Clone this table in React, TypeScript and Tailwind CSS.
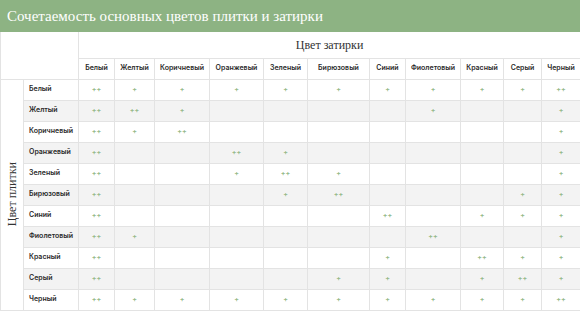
import React from 'react';

const cols = ['Белый', 'Желтый', 'Коричневый', 'Оранжевый', 'Зеленый', 'Бирюзовый', 'Синий', 'Фиолетовый', 'Красный', 'Серый', 'Черный'];
const widths = [36, 40, 55, 54, 44, 62, 36, 55, 43, 38, 39];

// '' = нет сочетания, '+' = хорошо, '++' = отлично
const rows: [string, string[]][] = [
  ['Белый', ['++', '+', '+', '+', '+', '+', '+', '+', '+', '+', '++']],
  ['Желтый', ['++', '++', '+', '', '', '', '', '+', '', '', '+']],
  ['Коричневый', ['++', '+', '++', '', '', '', '', '', '', '', '+']],
  ['Оранжевый', ['++', '', '', '++', '+', '', '', '', '', '', '+']],
  ['Зеленый', ['++', '', '', '+', '++', '+', '', '', '', '', '+']],
  ['Бирюзовый', ['++', '', '', '', '+', '++', '', '', '', '+', '+']],
  ['Синий', ['++', '', '', '', '', '', '++', '', '+', '+', '+']],
  ['Фиолетовый', ['++', '+', '', '', '', '', '', '++', '', '', '+']],
  ['Красный', ['++', '', '', '', '', '', '+', '', '++', '+', '+']],
  ['Серый', ['++', '', '', '', '', '+', '+', '', '+', '++', '+']],
  ['Черный', ['++', '+', '+', '+', '+', '+', '+', '+', '+', '+', '++']],
];

const cell = 'border border-[#e3e3e3]';
const small = "font-['Inter',sans-serif] text-[7px] font-semibold text-[#2b2b2b]";

export default function App() {
  return (
    <div className="w-[580px] h-[312px] overflow-hidden bg-white">
      <div className="h-[32px] bg-[#8db383] flex items-center px-[7px]">
        <h1 className="font-['Liberation_Serif',serif] text-[15px] text-white">
          Сочетаемость основных цветов плитки и затирки
        </h1>
      </div>
      <table className="table-fixed border-collapse w-[580px]">
        <colgroup>
          <col className="w-[23px]" />
          <col className="w-[55px]" />
          {widths.map((w, i) => (
            <col key={i} style={{ width: w }} />
          ))}
        </colgroup>
        <thead>
          <tr className="h-[26px]">
            <td colSpan={2} rowSpan={2} className="border-r border-l border-[#e3e3e3]" />
            <th colSpan={11} className={`${cell} border-t-0 font-['Liberation_Serif',serif] text-[12px] font-normal text-[#333]`}>
              Цвет затирки
            </th>
          </tr>
          <tr className="h-[21px]">
            {cols.map((c) => (
              <th key={c} className={`${cell} ${small} text-center`}>
                {c}
              </th>
            ))}
          </tr>
        </thead>
        <tbody>
          {rows.map(([name, vals], r) => (
            <tr key={name} className={`h-[21px] ${r % 2 === 1 ? 'bg-[#f3f3f3]' : 'bg-white'}`}>
              {r === 0 && (
                <td rowSpan={11} className={`${cell} bg-white p-0`}>
                  <div className="flex items-center justify-center">
                    <span className="[writing-mode:vertical-rl] rotate-180 font-['Liberation_Serif',serif] text-[12px] text-[#333] whitespace-nowrap">
                      Цвет плитки
                    </span>
                  </div>
                </td>
              )}
              <td className={`${cell} ${small} pl-[5px] text-left`}>{name}</td>
              {vals.map((v, i) => (
                <td key={i} className={`${cell} text-center font-['Inter',sans-serif] text-[7px] font-semibold text-[#93b888] leading-none`}>
                  {v}
                </td>
              ))}
            </tr>
          ))}
        </tbody>
      </table>
    </div>
  );
}
